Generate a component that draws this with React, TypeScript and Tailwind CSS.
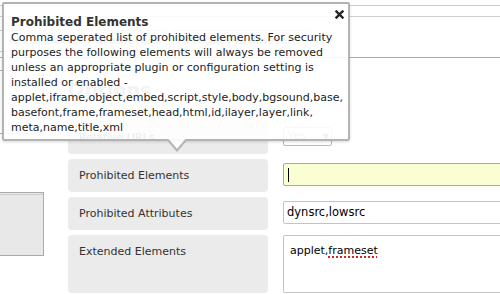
const font = { fontFamily: '"DejaVu Sans", Verdana, sans-serif' };

const Row = ({ label, tall, children }: { label: string; tall?: boolean; children: React.ReactNode }) => (
  <div className="flex gap-[15px]">
    <div
      className={`w-[200px] shrink-0 rounded-[4px] bg-[#ebebeb] px-[11px] py-[9px] text-[11px] leading-[15px] text-[#333] ${
        tall ? 'h-[58px]' : 'h-[33px]'
      }`}
    >
      {label}
    </div>
    <div className="flex-1 pt-[4px]">{children}</div>
  </div>
);

const lines = [
  'Comma seperated list of prohibited elements. For security',
  'purposes the following elements will always be removed',
  'unless an appropriate plugin or configuration setting is',
  'installed or enabled -',
  'applet,iframe,object,embed,script,style,body,bgsound,base,',
  'basefont,frame,frameset,head,html,id,ilayer,layer,link,',
  'meta,name,title,xml',
];

export default function App() {
  return (
    <div className="relative h-[294px] w-[500px] overflow-hidden bg-white" style={font}>
      {/* page behind the tooltip */}
      <div className="pt-[5px]">
        <div className="h-[12px] border-y border-[#cfcfcf]" />
        <div className="mt-[13px] flex h-[22px] gap-[6px] text-[11px] font-bold text-[#999]">
          <div className="flex w-[33px] items-center justify-end border border-l-0 border-[#ccc] pr-1">res</div>
          <div className="flex w-[128px] items-center justify-center border border-[#ccc]">Editor Parameters</div>
          <div className="flex w-[138px] items-center justify-center border border-[#ccc]">Plugin Parameters</div>
        </div>
        <div className="mt-[5px] border-t border-[#aaa]" />
        <div className="flex">
          <div className="w-[44px] shrink-0 pt-[12px]">
            <div className="h-[64px] border border-l-0 border-[#aaa] bg-white" />
            <div className="mt-[58px] h-[64px] border border-l-0 border-[#aaa] bg-[#e8e8e8]">
              <div className="mt-[1px] border-t border-[#ccc]" />
            </div>
          </div>
          <div className="ml-[24px] flex-1">
            <div className="mt-[20px] text-[19px] font-bold leading-[24px] text-[#888]">Options</div>
            <div className="mt-[19px] flex flex-col gap-[5px]">
              <Row label="Relative URLs">
                <div className="mt-[2px] flex h-[19px] w-[49px] items-center justify-between rounded-[2px] border border-[#bbb] pl-[4px] text-[11px] text-[#999]">
                  Yes
                  <span className="mr-[2px] text-[8px] text-[#666]">▼</span>
                </div>
              </Row>
              <Row label="Prohibited Elements">
                <div className="flex h-[23px] w-[240px] items-center rounded-[2px] border border-[#8fb0cc] bg-[#fbfdd2] px-[4px]">
                  <span className="h-[14px] w-[1px] bg-black" />
                </div>
              </Row>
              <Row label="Prohibited Attributes">
                <div className="flex h-[23px] w-[240px] items-center rounded-[2px] border border-[#c3c3c3] px-[3px] text-[11.5px] text-black">
                  dynsrc,lowsrc
                </div>
              </Row>
              <Row label="Extended Elements" tall>
                <div className="-mt-[4px] h-[58px] w-[240px] rounded-[2px] border border-[#c3c3c3] px-[6px] pt-[7px] text-[11px] leading-[15px] text-black">
                  applet,
                  <span className="underline decoration-[#e02020] decoration-dotted decoration-2 underline-offset-2">frameset</span>
                </div>
              </Row>
            </div>
          </div>
        </div>
      </div>

      {/* tooltip overlay */}
      <div className="absolute left-[2px] top-[2px] h-[139px] w-[348px] rounded-[2px] border-2 border-[#b3b3b3] bg-white/90 px-[7px] pt-[10px] text-[11px] leading-[15px] text-[#222] shadow-[0_1px_3px_rgba(0,0,0,0.15)]">
        <svg className="absolute right-[4px] top-[6px]" width="9" height="9" viewBox="0 0 9 9">
          <path d="M1.5 1.5 L7.5 7.5 M7.5 1.5 L1.5 7.5" stroke="#222" strokeWidth="2.4" strokeLinecap="square" />
        </svg>
        <div className="text-[12px] font-bold leading-[16px] text-[#333]">Prohibited Elements</div>
        <div className="whitespace-nowrap">
          {lines.map((l) => (
            <div key={l}>{l}</div>
          ))}
        </div>
        <svg className="absolute left-[164px] top-[135px]" width="18" height="13" viewBox="0 0 18 13">
          <path d="M0 0 L9 11 L18 0 Z" fill="rgba(255,255,255,0.9)" />
          <path d="M0 1 L9 11.5 L18 1" fill="none" stroke="#b3b3b3" strokeWidth="2" />
        </svg>
      </div>
    </div>
  );
}
